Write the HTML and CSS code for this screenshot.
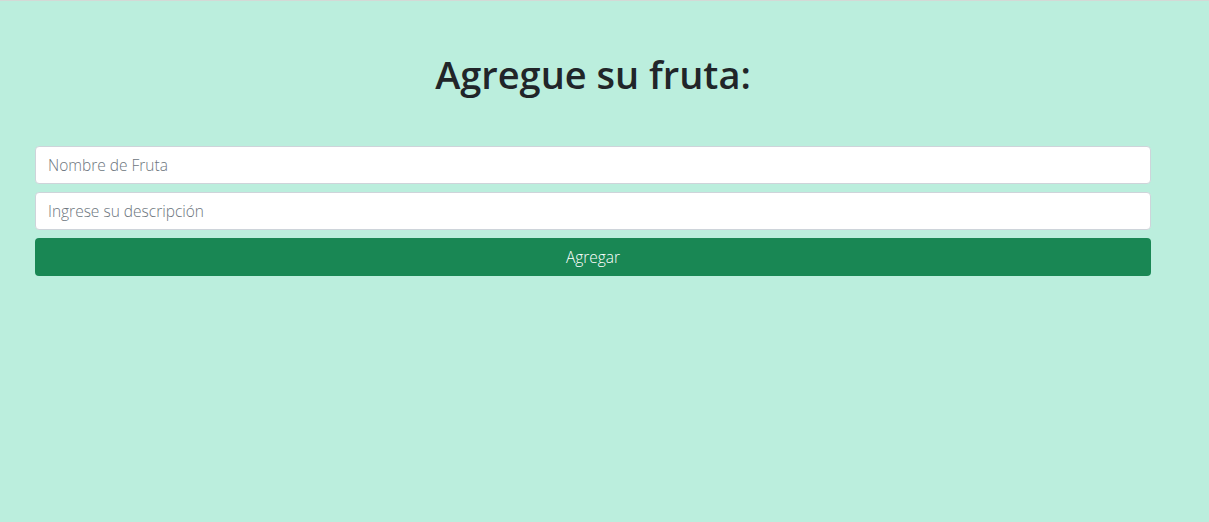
FILE: index.html
```html
<!DOCTYPE html>
<html lang="es">
<head>
<meta charset="utf-8">
<title>Agregue su fruta</title>
<link rel="stylesheet" href="styles.css">
</head>
<body>
<main class="page">
  <h1 class="title">Agregue su fruta:</h1>
  <form class="form">
    <input class="field" type="text" placeholder="Nombre de Fruta">
    <input class="field" type="text" placeholder="Ingrese su descripción">
    <button class="btn" type="button">Agregar</button>
  </form>
</main>
</body>
</html>
```
FILE: styles.css
```css
html, body {
  margin: 0;
  padding: 0;
  height: 100%;
}
body {
  background: #bbeedd;
  border-top: 1px solid #d4d9d6;
  box-sizing: border-box;
  font-family: "Open Sans", "Noto Sans", sans-serif;
  color: #212529;
}
.page {
  width: 1116px;
  margin-left: 35px;
  padding-top: 49px;
}
.title {
  margin: 0 0 48px;
  text-align: center;
  font-size: 38px;
  font-weight: 600;
  line-height: 48px;
  color: #212529;
}
.form {
  display: flex;
  flex-direction: column;
  gap: 8px;
}
.field {
  box-sizing: border-box;
  height: 38px;
  width: 100%;
  padding: 6px 12px;
  border: 1px solid #ced4da;
  border-radius: 4px;
  background: #fff;
  font-family: inherit;
  font-size: 15.5px;
  font-weight: 300;
  color: #212529;
  outline: none;
}
.field::placeholder {
  color: #6c757d;
  opacity: 1;
}
.btn {
  box-sizing: border-box;
  height: 38px;
  width: 100%;
  border: 0;
  border-radius: 4px;
  background: #198754;
  color: #fff;
  font-family: inherit;
  font-size: 15.5px;
  font-weight: 300;
  cursor: pointer;
}
```
